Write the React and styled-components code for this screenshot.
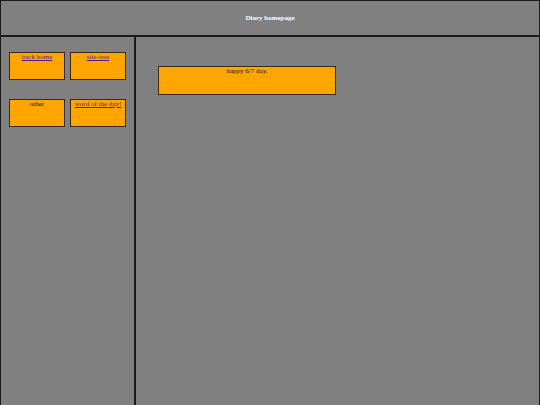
import React from "react";
import styled, { createGlobalStyle } from "styled-components";

const GlobalStyle = createGlobalStyle`
  html, body {
    margin: 0;
    padding: 0;
    background: #808080;
  }
  body {
    font-family: "Liberation Serif", "Times New Roman", serif;
    font-size: 8px;
  }
`;

const Page = styled.div`
  box-sizing: border-box;
  width: 540px;
  height: 405px;
  border: 1px solid #1a1a1a;
  border-bottom: none;
  background: #808080;
  display: flex;
  flex-direction: column;
`;

const Header = styled.header`
  height: 34px;
  border-bottom: 2px solid #1a1a1a;
  display: flex;
  align-items: center;
  justify-content: center;
  color: #ffffff;
  font-weight: bold;
  font-size: 7px;
`;

const Body = styled.div`
  flex: 1;
  display: flex;
`;

const Sidebar = styled.aside`
  width: 135px;
  border-right: 2px solid #1a1a1a;
  padding: 15px 0 0 8px;
  box-sizing: border-box;
  display: grid;
  grid-template-columns: repeat(2, 56px);
  grid-auto-rows: 28px;
  column-gap: 5px;
  row-gap: 19px;
  align-content: start;
`;

const Tile = styled.div`
  box-sizing: border-box;
  background: #ffa500;
  border: 1px solid #3a2a10;
  text-align: center;
  color: #111;
  font-size: 7px;
  line-height: 8px;
`;

const TileLink = styled.a`
  color: #551a8b;
  text-decoration: underline;
`;

const Main = styled.main`
  flex: 1;
  padding: 29px 0 0 22px;
`;

const Note = styled(Tile)`
  width: 178px;
  height: 29px;
`;

const tiles = [
  { label: "back home", href: "#" },
  { label: "site-tree", href: "#" },
  { label: "other" },
  { label: "word of the day!", href: "#" },
];

export default function App() {
  return (
    <>
      <GlobalStyle />
      <Page>
        <Header>Diary homepage</Header>
        <Body>
          <Sidebar>
            {tiles.map((t) => (
              <Tile key={t.label}>
                {t.href ? <TileLink href={t.href}>{t.label}</TileLink> : t.label}
              </Tile>
            ))}
          </Sidebar>
          <Main>
            <Note>happy 6/7 day.</Note>
          </Main>
        </Body>
      </Page>
    </>
  );
}
